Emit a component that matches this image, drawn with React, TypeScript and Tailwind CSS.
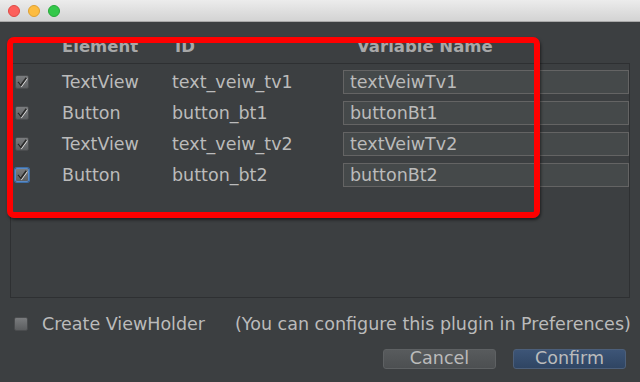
import React from 'react';

const rows = [
  { el: 'TextView', id: 'text_veiw_tv1', name: 'textVeiwTv1', focus: false },
  { el: 'Button', id: 'button_bt1', name: 'buttonBt1', focus: false },
  { el: 'TextView', id: 'text_veiw_tv2', name: 'textVeiwTv2', focus: false },
  { el: 'Button', id: 'button_bt2', name: 'buttonBt2', focus: true },
];

function Check({ checked, focus }: { checked: boolean; focus?: boolean }) {
  return (
    <div
      className={`w-[14px] h-[14px] rounded-[2px] border bg-gradient-to-b from-[#7a7c7e] to-[#5c5e60] flex items-center justify-center ${
        focus ? 'border-[#5a8ac6] shadow-[0_0_0_1px_#3d6fa8]' : 'border-[#4a4c4e]'
      }`}
    >
      {checked && (
        <svg width="12" height="12" viewBox="0 0 11 11">
          <path d="M2 5.5 L4.5 8.5 L9.5 1.5" stroke="#e8e8e8" strokeWidth="1.6" fill="none" transform="translate(0.6,0.6)" />
          <path d="M2 5.5 L4.5 8.5 L9.5 1.5" stroke="#2a2a2a" strokeWidth="1.6" fill="none" />
        </svg>
      )}
    </div>
  );
}

export default function App() {
  return (
    <div
      className="w-[640px] h-[382px] bg-[#3c3f41] flex flex-col relative overflow-hidden text-[#bbbbbb]"
      style={{ fontFamily: '"DejaVu Sans", sans-serif' }}
    >
      {/* Title bar */}
      <div className="h-[22px] shrink-0 bg-gradient-to-b from-[#ececec] to-[#d3d3d3] border-b border-[#a8a8a8] flex items-center gap-[8px] pl-[8px]">
        <div className="w-[12px] h-[12px] rounded-full bg-[#fc605c] border border-[#de4a45]" />
        <div className="w-[12px] h-[12px] rounded-full bg-[#fdbc40] border border-[#dea032]" />
        <div className="w-[12px] h-[12px] rounded-full bg-[#34c84a] border border-[#27a83a]" />
      </div>

      {/* Header */}
      <div className="h-[41px] shrink-0 flex items-end pb-[8px] text-[16.5px] font-bold text-[#a8a8a8] leading-none">
        <span className="ml-[62px] w-[113px]">Element</span>
        <span className="w-[182px]">ID</span>
        <span>Variable Name</span>
      </div>

      {/* Table panel */}
      <div className="mx-[10px] h-[235px] shrink-0 border border-[#2e3032] pt-[6px] flex flex-col gap-[7px]">
        {rows.map((r, i) => (
          <div key={i} className="h-[24px] flex items-center text-[17.5px]">
            <div className="ml-[4px] w-[47px]">
              <Check checked focus={r.focus} />
            </div>
            <span className="w-[110px]">{r.el}</span>
            <span className="w-[171px]">{r.id}</span>
            <div className="w-[286px] h-[24px] bg-[#45494a] border border-[#646464] flex items-center pl-[6px]">
              {r.name}
            </div>
          </div>
        ))}
      </div>

      {/* Options */}
      <div className="h-[50px] pt-[2px] flex items-center text-[17.5px] pl-[14px]">
        <Check checked={false} />
        <span className="ml-[14px]">Create ViewHolder</span>
        <span className="ml-[30px]">(You can configure this plugin in Preferences)</span>
      </div>

      {/* Buttons */}
      <div className="pt-[1px] flex justify-end gap-[17px] pr-[14px] text-[17.5px]">
        <button className="w-[113px] h-[20px] rounded-[3px] border border-[#5e6163] bg-gradient-to-b from-[#585b5d] to-[#4c4f51] text-[#bbbbbb] flex items-center justify-center leading-none">
          Cancel
        </button>
        <button className="w-[113px] h-[20px] rounded-[3px] border border-[#4c5f7a] bg-gradient-to-b from-[#3d5577] to-[#2f4563] text-[#bbbbbb] flex items-center justify-center leading-none">
          Confirm
        </button>
      </div>

      {/* Red annotation */}
      <div className="absolute left-[7px] top-[37px] w-[533px] h-[181px] border-[6px] border-[#ff0000] rounded-[7px] shadow-[1px_2px_3px_rgba(0,0,0,0.5)]" />
    </div>
  );
}
